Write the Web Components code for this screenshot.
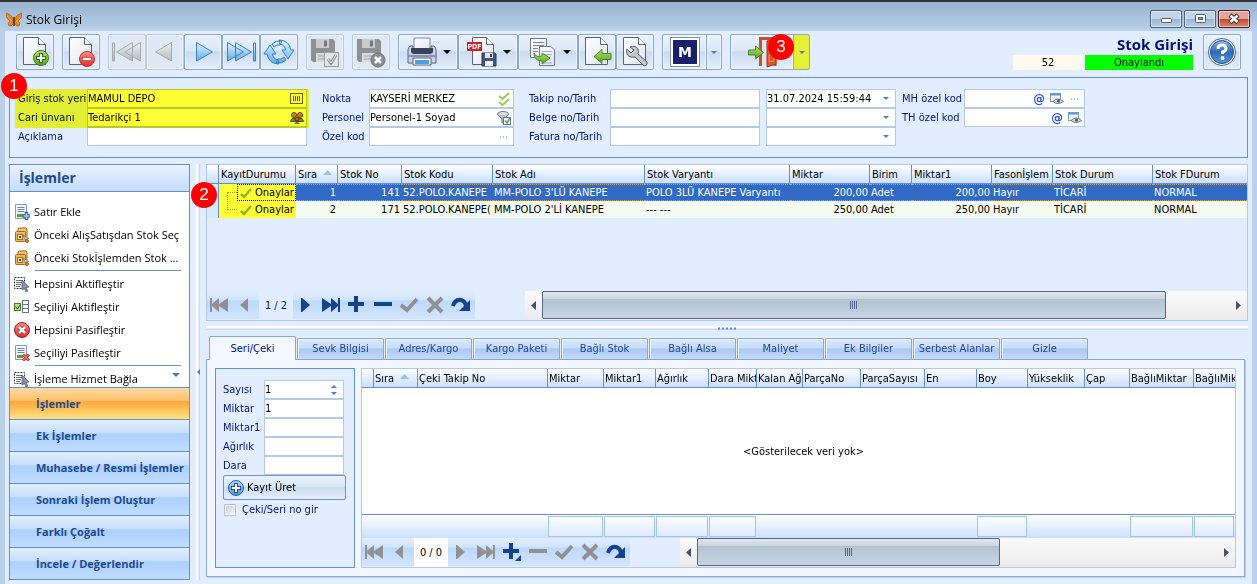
<!DOCTYPE html>
<html lang="tr">
<head>
<meta charset="utf-8">
<title>Stok Girişi</title>
<style>
    :root {
        --ui: "DejaVu Sans Condensed", "Noto Sans", sans-serif;
        --segoe: "Open Sans", "Noto Sans", sans-serif;
        --panel: #e2eeff;
        --line: #6590cf;
        --field-line: #b3c9e8;
        --label: #00157f;
        --mark: #ffff33;
    }
    html, body {
        margin: 0;
        height: 100%;
    }
    body {
        font: 11px/16px var(--ui);
        color: #000;
        background: #b9d1ea;
    }
</style>
</head>
<body>
<app-window title="Stok Girişi">
    <tool-bar></tool-bar>
    <header-form></header-form>
    <work-area>
        <side-panel slot="side"></side-panel>
        <grid-frame slot="top">
            <data-grid source="lines"></data-grid>
            <grid-navigator slot="nav" position="1 / 2" enabled="next last add remove redo"></grid-navigator>
            <scroll-bar slot="nav" thumb="624" rest="64"></scroll-bar>
        </grid-frame>
        <tab-panel slot="bottom">
            <record-form></record-form>
            <grid-frame fill>
                <data-grid source="serials"></data-grid>
                <grid-navigator slot="nav" position="0 / 0" enabled="addmenu redo" plain></grid-navigator>
                <scroll-bar slot="nav" thumb="303" rest="219"></scroll-bar>
            </grid-frame>
        </tab-panel>
    </work-area>
</app-window>

<script>
const GRADIENTS = `
    <defs>
        <linearGradient id="blue" x2="0" y2="1"><stop offset="0" stop-color="#e4f5ff"/><stop offset="1" stop-color="#5eaee8"/></linearGradient>
        <linearGradient id="gray" x2="0" y2="1"><stop offset="0" stop-color="#f2f2f2"/><stop offset="1" stop-color="#b4b8bd"/></linearGradient>
        <linearGradient id="green" x2="0" y2="1"><stop offset="0" stop-color="#b5e070"/><stop offset="1" stop-color="#55a020"/></linearGradient>
        <linearGradient id="red" x2="0" y2="1"><stop offset="0" stop-color="#ff8b84"/><stop offset="1" stop-color="#dc2f2a"/></linearGradient>
        <linearGradient id="paper" x2="1" y2="1"><stop offset="0" stop-color="#fff"/><stop offset="1" stop-color="#dfe4ee"/></linearGradient>
        <linearGradient id="orb" x2="0" y2="1"><stop offset="0" stop-color="#8fb8e6"/><stop offset=".5" stop-color="#2f68b4"/><stop offset="1" stop-color="#5b98dc"/></linearGradient>
        <linearGradient id="sky" x2="0" y2="1"><stop offset="0" stop-color="#b5d8f5"/><stop offset="1" stop-color="#4f96d4"/></linearGradient>
    </defs>`;

const PAGE = '<path d="M4.500 1.500H19.500L26.500 8.500V28.500H4.500Z" fill="url(#paper)" stroke="#5a6478"/><path d="M19.500 1.500V8.500H26.500" fill="#fff" stroke="#5a6478"/>';
const FLOPPY = '<path d="M2 3H24L26 5V26H4L2 24Z" fill="#8f9092"/><path d="M7 3H20V12H7Z" fill="#c9cbcd"/><path d="M15 4.500H18V10.500H15Z" fill="#77797b"/><path d="M7 17H21V26H7Z" fill="#d9dadb"/><path d="M9 20H19M9 23H19" stroke="#a0a2a4"/>';
const CURSOR_LIST = '<path d="M.5 1.500H10.500V12.500H.5Z" fill="#fff" stroke="#39415c" stroke-dasharray="2 1"/><path d="M2 4.500H9M2 6.500H9M2 8.500H7M2 10.500H6" stroke="#68718a"/><path d="M8 4L15 11L12 11.500L14 15L12 16L10.500 12.500L8 14Z" fill="#8a93a5" stroke="#4b5468" stroke-width=".7"/>';
const LIST_PAGE = '<path d="M1.500 .5H12.500V14.500H1.500Z" fill="#f4f8fd" stroke="#7f9cc4"/><path d="M3.500 3.500H10.500M3.500 5.500H10.500M3.500 7.500H10.500" stroke="#6d87ac"/><path d="M3 10H9V13H3Z" fill="#57a42c"/>';
const BOX = '<path d="M4 4V2Q5 .5 8 1Q12 0 13 2V10L11 12V5H3Z" fill="#f1c27b" stroke="#a86b1c"/><rect x="1.500" y="4.500" width="10" height="10" rx="1" fill="#f3b75c" stroke="#a86b1c"/><rect x="3.500" y="7.500" width="5" height="5" fill="#fff3dc" stroke="#a86b1c"/><path d="M6 9V11" stroke="#57400f" stroke-width="2"/><path d="M9 8L14.500 11.500L12 12V14Z" fill="#f6f6f6" stroke="#7a7a7a"/><circle cx="13" cy="14" r="1.500" fill="#e79a2a" stroke="#8c5a12"/>';

// name: [viewBox width, viewBox height, markup]
const ICONS = {
    butterfly: [16, 16, '<path d="M8 8Q5 2 0 1Q0 7 4 9Q1 11 3 14Q6 15 8 10Q10 15 13 14Q15 11 12 9Q16 7 16 1Q11 2 8 8Z" fill="#f29a2c" stroke="#a55a10" stroke-width=".8"/><path d="M2 3L7 9M14 3L9 9M4 13L7 9M12 13L9 9" stroke="#c56a10" stroke-width=".8"/><path d="M8 5V14" stroke="#4a2a10" stroke-width="1.500"/>'],
    "new": [32, 32, PAGE + '<circle cx="22" cy="22" r="7.500" fill="url(#green)" stroke="#3f7d1a"/><path d="M22 17V27M17 22H27" stroke="#37701a" stroke-width="4"/><path d="M22 18V26M18 22H26" stroke="#fff" stroke-width="2"/>'],
    "delete": [32, 32, PAGE + '<circle cx="22" cy="23" r="7.500" fill="url(#red)" stroke="#c5332e"/><rect x="17.500" y="21.500" width="9" height="3" fill="#fff" stroke="#b32925" stroke-width=".6"/>'],
    first: [32, 32, '<path d="M1.500 7V25H3.500V7Z M21.500 6.500V25L5.500 16Z M29.500 6.500V25L13.500 16Z" fill="url(#gray)" stroke="#a5a9af"/>'],
    prev: [32, 32, '<path d="M22.500 6.500V25L6.500 16Z" fill="url(#gray)" stroke="#a5a9af"/>'],
    next: [32, 32, '<path d="M9.500 6.500V25L25.500 16Z" fill="url(#blue)" stroke="#3f7fbd"/>'],
    last: [32, 32, '<path d="M2.500 6.500V25L18.500 16Z M10.500 6.500V25L26.500 16Z M28.500 7V25H30.500V7Z" fill="url(#blue)" stroke="#3f7fbd"/>'],
    refresh: [32, 32, '<path d="M4 18H1L7 9L13 18H9.500Q10 23 15 24L16 28Q6 28 4 18Z M28 14H31L25 23L19 14H22.500Q22 9 17 8L16 4Q26 4 28 14Z M9 8Q13 4 19 5L17 9Q14 8 11 11Z M23 24Q19 28 13 27L15 23Q18 24 21 21Z" fill="url(#blue)" stroke="#3580bd"/>'],
    savecheck: [32, 32, FLOPPY + '<rect x="15.500" y="16.500" width="14" height="14" fill="#e4e5e6" stroke="#9a9b9d"/><path d="M19 23L22 27L27 19" fill="none" stroke="#8a8b8d" stroke-width="3"/><path d="M19 23L22 27L27 19" fill="none" stroke="#fff"/>'],
    savex: [32, 32, FLOPPY + '<circle cx="23" cy="24" r="7" fill="#8a8c8e" stroke="#717375"/><path d="M20 21L26 27M26 21L20 27" stroke="#fff" stroke-width="2.500"/>'],
    printer: [32, 32, '<path d="M8 2H24V14H8Z" fill="url(#paper)" stroke="#8089a0"/><path d="M2 14Q2 12 4 10H7V15H25V10H28Q30 12 30 14V27H2Z" fill="#c9d2e4" stroke="#59637e"/><path d="M5 12H27V16Q26 18 24 18H8Q6 18 5 16Z" fill="#3b4257"/><path d="M2 19H30V21H2Z" fill="#8390b0"/><path d="M7 22H25V29H7Z" fill="#fff" stroke="#59637e"/><path d="M9 24H23V28H9Z" fill="#4b9fe0"/>'],
    pdf: [32, 32, '<path d="M6.500 1.500H20.500L27.500 8.500V28.500H6.500Z" fill="url(#paper)" stroke="#5a6478"/><path d="M20.500 1.500V8.500H27.500" fill="#fff" stroke="#5a6478"/><rect x="1" y="6" width="15" height="9" fill="#cf2022"/><text x="8.500" y="13" text-anchor="middle" font-family="DejaVu Sans Condensed" font-size="7" font-weight="700" fill="#fff">PDF</text><path d="M16 17H29L30 18V30H16Z" fill="#44557c" stroke="#303b5a"/><path d="M19 17H27V22H19Z" fill="#dfe4ee"/><path d="M25 18V21" stroke="#303b5a" stroke-width="2"/><path d="M19 25H27V30H19Z" fill="#eef1f6"/>'],
    transfer: [32, 32, '<path d="M4.500 2.500H20.500V21.500H4.500Z" fill="url(#paper)" stroke="#6b7896"/><path d="M7 6.500H18M7 9.500H18M7 12.500H12M7 15.500H12" stroke="#7987a5"/><path d="M13.500 10.500H25L28.500 14V29.500H13.500Z" fill="url(#paper)" stroke="#6b7896"/><path d="M16 15.500H26M16 18.500H26M16 27H26" stroke="#a5afc4"/><path d="M8 17Q10 22 16 20V17L24 22L16 28V25Q8 25 8 17Z" fill="url(#green)" stroke="#4c8822"/>'],
    "import": [32, 32, PAGE + '<path d="M13 20.500L21 13.500V17.500H30V23.500H21V27.500Z" fill="url(#green)" stroke="#4c8822"/>'],
    wrench: [32, 32, PAGE + '<path d="M8 13L12 17L15 14L11 11Q17 9 19 13Q20 16 19 18L28 26Q29 29 26 30L24 29L16 21Q10 22 8 18Q7 15 8 13Z" fill="#c3c8d0" stroke="#555d6b"/>'],
    m: [32, 32, '<rect x="1.500" y="1.500" width="29" height="29" fill="#fff" stroke="#8290b4"/><rect x="4" y="4" width="24" height="24" fill="#18206c"/><text x="16" y="21" text-anchor="middle" font-family="DejaVu Sans" font-size="14" font-weight="700" fill="#fff">M</text>'],
    door: [32, 32, '<path d="M14.500 30V2.500H29V30" fill="none" stroke="#c8512c" stroke-width="3"/><path d="M16 4H28V28H16Z" fill="#dce6f2"/><path d="M21 5L30 3V28L21 31Z" fill="#dd5527" stroke="#a83a15"/><path d="M23 8L28 7V15L23 16ZM23 19L28 18V25L23 26Z" fill="none" stroke="#f08a5e"/><path d="M2.500 14H9.500V10L17.500 16.500L9.500 23V19H2.500Z" fill="url(#green)" stroke="#4c8822"/>'],
    help: [32, 32, '<circle cx="16" cy="16" r="13.500" fill="#f4f8fd" stroke="#48618f"/><circle cx="16" cy="16" r="11.500" fill="url(#orb)" stroke="#274f8e"/><path d="M12 13Q12 9 16 9Q20 9 20 12.500Q20 15 16.500 16V18" fill="none" stroke="#fff" stroke-width="3"/><circle cx="16.500" cy="22" r="2" fill="#fff"/>'],
    down: [8, 4, '<path d="M0 0H8L4 4Z" fill="currentColor"/>'],
    up: [8, 4, '<path d="M0 4H8L4 0Z" fill="currentColor"/>'],
    minimize: [18, 12, '<rect x="4.500" y="5.500" width="10" height="4" rx="1" fill="#fff" stroke="#4d5a6c"/>'],
    maximize: [18, 12, '<rect x="4.500" y="1.500" width="10" height="8" rx="1" fill="#fff" stroke="#4d5a6c"/><rect x="7.500" y="4.500" width="4" height="2" fill="#8ea9c8" stroke="#4d5a6c"/>'],
    close: [18, 12, '<path d="M5 2L13 9.500M13 2L5 9.500" stroke="#4a2a2c" stroke-width="4.500"/><path d="M5.500 2.500L12.500 9M12.500 2.500L5.500 9" stroke="#fff" stroke-width="2.500"/>'],
    barcode: [14, 12, '<rect x=".5" y=".5" width="12" height="10" fill="none" stroke="#75600c"/><path d="M3.500 3V8M5.500 3V8M7.500 3V8M9.500 3V8" stroke="#5d4c08"/>'],
    people: [14, 14, '<circle cx="4" cy="4" r="2.500" fill="#c98a40" stroke="#6e3f14"/><circle cx="10" cy="4" r="2.500" fill="#c98a40" stroke="#6e3f14"/><path d="M.5 10.500Q1 7 4 7Q7 7 7 10Q7 7 10 7Q13 7 13.500 10.500Z" fill="#6f8f3a" stroke="#41551f"/><circle cx="7" cy="8" r="2" fill="#a5702d" stroke="#5e3510"/><path d="M4 13Q7 9 10 13Z" fill="#7a6a2a"/>'],
    checks: [12, 14, '<path d="M1 4L4.500 7L11 1M1 10L4.500 13L11 7" fill="none" stroke="#97cc4b" stroke-width="2"/>'],
    filter: [14, 14, '<ellipse cx="6" cy="3" rx="5.500" ry="2.500" fill="#dfe4ea" stroke="#6a7482"/><path d="M1 4L5 8V12L7 11V8L11 4" fill="#b9c1cc" stroke="#6a7482"/><rect x="6.500" y="6.500" width="7" height="7" fill="#fff" stroke="#6a7482"/><path d="M8 9.500L10 12L13 7" fill="none" stroke="#4fa53d" stroke-width="1.500"/>'],
    dots: [10, 4, '<path d="M1 2H2M4 2H5M7 2H8" stroke="#4f7fbf"/>'],
    eye: [14, 12, '<rect x=".5" y=".5" width="10" height="8" fill="#eef5fd" stroke="#7f9dc3"/><path d="M0 1.500H11" stroke="#6496cc" stroke-width="2"/><path d="M3 8.500Q8 3.500 13.500 8.500Q8 12.500 3 8.500Z" fill="#dce1e8" stroke="#66707f"/><circle cx="8.500" cy="8" r="1.600" fill="#4f5868"/>'],
    listadd: [16, 16, LIST_PAGE + '<path d="M12.500 8V16M8.500 12H16" stroke="#2b5c9e" stroke-width="3.500"/><path d="M12.500 9V15M9.500 12H15.500" stroke="#a9cdf5" stroke-width="1.500"/>'],
    listdel: [16, 16, LIST_PAGE + '<path d="M9 9.500L15 15.500M15 9.500L9 15.500" stroke="#c33434" stroke-width="3"/><path d="M9.500 10L14.500 15M14.500 10L9.500 15" stroke="#ff9a94"/>'],
    box: [16, 16, BOX],
    cursorlist: [16, 16, CURSOR_LIST],
    checkgrid: [16, 16, '<rect x="8.500" y="1.500" width="6" height="12" fill="#fff" stroke="#5a77a6"/><path d="M8 5.500H15M8 9.500H15" stroke="#5a77a6"/><rect x=".5" y="4.500" width="6" height="7" fill="#b9e07c" stroke="#4d7d1c"/><path d="M1.500 7.500L3.500 10L6 6" fill="none" stroke="#2d5a0a"/>'],
    redx: [16, 16, '<circle cx="8" cy="8" r="7.500" fill="url(#red)" stroke="#8e2020"/><path d="M5 5L11 11M11 5L5 11" stroke="#8c2a2a" stroke-width="4"/><path d="M5 5L11 11M11 5L5 11" stroke="#fff" stroke-width="2.500"/>'],
    pluscircle: [16, 16, '<circle cx="8" cy="8" r="7.500" fill="url(#sky)" stroke="#2c5c9c"/><path d="M8 3V13M3 8H13" stroke="#24508d" stroke-width="4"/><path d="M8 4V12M4 8H12" stroke="#fff" stroke-width="2"/>'],
    tick: [12, 12, '<path d="M1 7L4 10L11 2" fill="none" stroke="#93b32c" stroke-width="2.500"/>'],
    navfirst: [20, 18, '<path d="M1 2H3V8L10 2V8L19 2V16L10 10V16L3 10V16H1Z" fill="currentColor"/>'],
    navprev: [20, 18, '<path d="M13 2V16L5 9Z" fill="currentColor"/>'],
    navnext: [20, 18, '<path d="M6 2V16H7L15 9L7 2Z" fill="currentColor"/>'],
    navlast: [20, 18, '<path d="M19 2H17V8L10 2V8L1 2V16L10 10V16L17 10V16H19Z" fill="currentColor"/>'],
    navadd: [20, 18, '<path d="M9 0V16M1 8H17" stroke="currentColor" stroke-width="4"/>'],
    navaddmenu: [20, 18, '<path d="M9 0V16M1 8H17" stroke="currentColor" stroke-width="4"/><path d="M19 12V18H13Z" fill="currentColor"/>'],
    navremove: [20, 18, '<path d="M1 8H19" stroke="currentColor" stroke-width="4"/>'],
    navcheck: [20, 18, '<path d="M2 9L8 14L18 3" fill="none" stroke="currentColor" stroke-width="4"/>'],
    navcancel: [20, 18, '<path d="M3 2L17 16M17 2L3 16" fill="none" stroke="currentColor" stroke-width="4"/>'],
    navredo: [20, 18, '<path d="M2 10Q4 3 10 4Q14 5 15 10" fill="none" stroke="currentColor" stroke-width="4"/><path d="M19 4V15H8Z" fill="currentColor"/>']
};

function icon(name, width, height) {
    const [w, h, body] = ICONS[name];
    return `<svg width="${width || w}" height="${height || h}" viewBox="0 0 ${w} ${h}" aria-hidden="true">${body.includes("url(") ? GRADIENTS : ""}${body}</svg>`;
}

function render(element, html) {
    const template = document.createElement("template");
    template.innerHTML = html;
    element.attachShadow({ mode: "open" }).appendChild(template.content.cloneNode(true));
}

// Red numbered marker laid over the content
class StepMark extends HTMLElement {
    constructor() {
        super();
        render(this, `
            <style>
                :host {
                    position: absolute;
                    z-index: 5;
                    width: 26px;
                    height: 26px;
                    border-radius: 50%;
                    background: #f00;
                    color: #fff;
                    font: 17px/26px "Liberation Sans", sans-serif;
                    text-align: center;
                }
            </style>
            <slot></slot>
        `);
    }
}

class AppWindow extends HTMLElement {
    constructor() {
        super();
        render(this, `
            <style>
                :host {
                    display: flex;
                    flex-direction: column;
                    min-height: 100%;
                    box-sizing: border-box;
                    border-top: 2px solid #37343c;
                }
                header {
                    display: flex;
                    align-items: center;
                    gap: 4px;
                    height: 29px;
                    padding: 6px 7px 0 6px;
                    box-sizing: border-box;
                    background: linear-gradient(#98b2d0, #b9d1ea);
                    font: 12px/16px var(--segoe);
                }
                h1 {
                    flex: 1;
                    margin: 0;
                    font: inherit;
                }
                .controls {
                    display: flex;
                    gap: 2px;
                    align-self: flex-start;
                    margin-top: 2px;
                }
                .controls button {
                    display: grid;
                    place-items: center;
                    width: 32px;
                    height: 18px;
                    padding: 0;
                    border: 1px solid #52617a;
                    border-radius: 2px;
                    box-shadow: inset 0 0 0 1px #ffffff80;
                    background: linear-gradient(#c3d4e8 50%, #9bb4d0 50%, #b9d0e6);
                }
                .controls .close {
                    border-color: #4b1c1e;
                    background: linear-gradient(#e3a598 50%, #bd4a37 50%, #d48a70);
                }
                main {
                    flex: 1;
                    display: flex;
                    flex-direction: column;
                    margin: 0 5px;
                    padding: 0 4px 4px;
                    background: var(--panel);
                }
            </style>
            <header>
                ${icon("butterfly")}
                <h1>${this.getAttribute("title")}</h1>
                <div class="controls">
                    <button aria-label="Küçült">${icon("minimize")}</button>
                    <button aria-label="Büyüt">${icon("maximize")}</button>
                    <button class="close" aria-label="Kapat">${icon("close")}</button>
                </div>
            </header>
            <main><slot></slot></main>
        `);
    }
}

class ToolButton extends HTMLElement {
    constructor() {
        super();
        const menu = this.getAttribute("menu");
        render(this, `
            <style>
                :host {
                    display: flex;
                    position: relative;
                }
                button {
                    display: flex;
                    align-items: center;
                    justify-content: center;
                    gap: 4px;
                    min-width: 38px;
                    height: 36px;
                    padding: 0 2px;
                    box-sizing: border-box;
                    border: 1px solid #8aa8cf;
                    border-radius: 2px;
                    box-shadow: inset 0 0 0 1px #ffffff90;
                    background: linear-gradient(#e9f2fd, #dce8f7 45%, #cbdbee 50%, #e3eefb);
                }
                button:disabled {
                    border-color: #b9c9df;
                    background: #dfe9f6;
                }
                :host([menu="plain"]) button {
                    width: 60px;
                    gap: 5px;
                }
                :host([menu="split"]) .main {
                    width: 45px;
                    border-radius: 2px 0 0 2px;
                }
                :host([wide]) .main {
                    width: 64px;
                }
                .drop {
                    min-width: 16px;
                    margin-left: -1px;
                    color: #4f7fbf;
                    border-radius: 0 2px 2px 0;
                }
                :host([wide]) .drop {
                    min-width: 17px;
                    background: #e4f031;
                    box-shadow: none;
                }
                step-mark {
                    left: 38px;
                    top: 0;
                }
            </style>
            <button class="main" aria-label="${this.getAttribute("label")}" ${this.hasAttribute("off") ? "disabled" : ""}>
                ${icon(this.getAttribute("icon"))}${menu === "plain" ? icon("down") : ""}
            </button>
            ${menu === "split" ? `<button class="drop" aria-label="Seçenekler">${icon("down", 6, 3)}</button>` : ""}
            ${this.hasAttribute("wide") ? "<step-mark>3</step-mark>" : ""}
        `);
    }
}

class ToolBar extends HTMLElement {
    constructor() {
        super();
        render(this, `
            <style>
                :host {
                    display: flex;
                    align-items: flex-start;
                    gap: 8px;
                    height: 43px;
                    padding: 3px 7px 0;
                }
                .group {
                    display: flex;
                }
                .status {
                    display: grid;
                    grid-template-columns: 70px 108px;
                    gap: 0 2px;
                    margin-left: auto;
                    line-height: 15px;
                    text-align: center;
                }
                .status strong {
                    grid-column: 1 / 3;
                    text-align: right;
                    color: #00137a;
                    font: 700 15px/21px var(--segoe);
                }
                .count { background: #fff9ee; }
                .state { background: #0f0; }
                .status + tool-button { margin-left: 2px; }
            </style>
            <tool-button icon="new" label="Yeni"></tool-button>
            <tool-button icon="delete" label="Sil"></tool-button>
            <div class="group">
                <tool-button icon="first" label="İlk" off></tool-button>
                <tool-button icon="prev" label="Önceki" off></tool-button>
                <tool-button icon="next" label="Sonraki"></tool-button>
                <tool-button icon="last" label="Son"></tool-button>
                <tool-button icon="refresh" label="Yenile"></tool-button>
            </div>
            <tool-button icon="savecheck" label="Kaydet" off></tool-button>
            <tool-button icon="savex" label="Vazgeç" off></tool-button>
            <div class="group">
                <tool-button icon="printer" label="Yazdır" menu="plain"></tool-button>
                <tool-button icon="pdf" label="PDF kaydet" menu="plain"></tool-button>
                <tool-button icon="transfer" label="Aktar" menu="plain"></tool-button>
                <tool-button icon="import" label="İçeri al"></tool-button>
                <tool-button icon="wrench" label="Ayarlar"></tool-button>
            </div>
            <tool-button icon="m" label="M" menu="split"></tool-button>
            <tool-button icon="door" label="Çıkış" menu="split" wide></tool-button>
            <div class="status">
                <strong>Stok Girişi</strong>
                <span class="count">52</span>
                <span class="state">Onaylandı</span>
            </div>
            <tool-button icon="help" label="Yardım"></tool-button>
        `);
    }
}

// One label + box pair; the pair lands in the columns of the parent grid
class FormField extends HTMLElement {
    constructor() {
        super();
        const label = this.getAttribute("label") || "";
        const name = label || this.getAttribute("name");
        const value = this.getAttribute("value") || "";
        const kind = this.getAttribute("kind");
        const icons = (this.getAttribute("icons") || "").split(" ").filter(Boolean);
        const control = kind === "date"
            ? `<select id="control" aria-label="${name}"><option>${value}</option></select><span class="arrow">${icon("down", 6, 3)}</span>`
            : `<input id="control" value="${value}" aria-label="${name}">`;
        render(this, `
            <style>
                :host {
                    display: contents;
                }
                label {
                    color: var(--label);
                    line-height: 19px;
                    white-space: nowrap;
                }
                .box {
                    position: relative;
                    display: flex;
                    align-items: center;
                    height: 19px;
                    box-sizing: border-box;
                    border: 1px solid var(--field-line);
                    background: #fff;
                    color: #4f7fbf;
                }
                input, select {
                    appearance: none;
                    flex: 1;
                    min-width: 0;
                    height: 17px;
                    margin: 0;
                    padding: 0;
                    border: 0;
                    outline: 0;
                    background: none;
                    color: #000;
                    font: inherit;
                }
                .box button {
                    display: grid;
                    place-items: center;
                    min-width: 18px;
                    height: 17px;
                    padding: 0;
                    border: 0;
                    background: none;
                    color: #2a4fe0;
                    font: 700 13px/16px var(--ui);
                }
                .arrow {
                    display: flex;
                    padding: 0 6px;
                    pointer-events: none;
                }
                .spin {
                    display: flex;
                    flex-direction: column;
                    gap: 4px;
                    padding: 0 6px;
                }
            </style>
            ${this.hasAttribute("label") ? `<label for="control">${label}</label>` : ""}
            <div class="box">
                ${control}
                ${kind === "spin" ? `<span class="spin">${icon("up", 6, 3)}${icon("down", 6, 3)}</span>` : ""}
                ${icons.map(item => `<button aria-label="${name} seç">${item === "at" ? "@" : icon(item)}</button>`).join("")}
            </div>
        `);
    }
}

class HeaderForm extends HTMLElement {
    constructor() {
        super();
        render(this, `
            <style>
                :host {
                    position: relative;
                    display: flex;
                    align-items: flex-start;
                    padding: 11px 8px;
                    border: 1px solid var(--line);
                }
                .group {
                    display: grid;
                    margin-right: 15px;
                }
                .stock { grid-template-columns: 69px 220px; }
                .point { grid-template-columns: 47px 145px; }
                .paper { grid-template-columns: 81px 150px; }
                .dates { grid-template-columns: 130px; }
                .codes { grid-template-columns: 62px 121px; }
                .paper, .dates { margin-right: 6px; }
                .highlight {
                    position: absolute;
                    left: 5px;
                    top: 11px;
                    width: 294px;
                    height: 39px;
                    background: var(--mark);
                    mix-blend-mode: multiply;
                    pointer-events: none;
                }
                step-mark {
                    left: -9px;
                    top: -5px;
                }
            </style>
            <div class="group stock">
                <form-field label="Giriş stok yeri" value="MAMUL DEPO" icons="barcode"></form-field>
                <form-field label="Cari ünvanı" value="Tedarikçi 1" icons="people"></form-field>
                <form-field label="Açıklama"></form-field>
            </div>
            <div class="group point">
                <form-field label="Nokta" value="KAYSERİ MERKEZ" icons="checks"></form-field>
                <form-field label="Personel" value="Personel-1 Soyad" icons="filter"></form-field>
                <form-field label="Özel kod" icons="dots"></form-field>
            </div>
            <div class="group paper">
                <form-field label="Takip no/Tarih"></form-field>
                <form-field label="Belge no/Tarih"></form-field>
                <form-field label="Fatura no/Tarih"></form-field>
            </div>
            <div class="group dates">
                <form-field name="Takip tarihi" kind="date" value="31.07.2024 15:59:44"></form-field>
                <form-field name="Belge tarihi" kind="date"></form-field>
                <form-field name="Fatura tarihi" kind="date"></form-field>
            </div>
            <div class="group codes">
                <form-field label="MH özel kod" icons="at eye dots"></form-field>
                <form-field label="TH özel kod" icons="at eye"></form-field>
            </div>
            <div class="highlight"></div>
            <step-mark>1</step-mark>
        `);
    }
}

class WorkArea extends HTMLElement {
    constructor() {
        super();
        render(this, `
            <style>
                :host {
                    flex: 1;
                    display: grid;
                    grid-template-columns: 181px 16px minmax(0, 1fr);
                    margin-top: 6px;
                    position: relative;
                }
                .vsplit, .hsplit {
                    display: grid;
                    place-items: center;
                    background: linear-gradient(90deg, transparent 6px, #fff 6px, #fff 8px, transparent 8px, transparent 9px, #c3dcff 9px, #c3dcff 10px, transparent 10px);
                    color: #4f7fbf;
                }
                .hsplit {
                    flex: none;
                    height: 15px;
                    background: linear-gradient(transparent 5px, #fff 5px, #fff 7px, transparent 7px, transparent 8px, #c3dcff 8px, #c3dcff 9px, transparent 9px);
                }
                .right {
                    display: flex;
                    flex-direction: column;
                    min-width: 0;
                }
                step-mark {
                    left: 182px;
                    top: 18px;
                }
            </style>
            <slot name="side"></slot>
            <div class="vsplit"><svg width="3" height="6"><path d="M3 0V6L0 3Z" fill="#4f7fbf"/></svg></div>
            <div class="right">
                <slot name="top"></slot>
                <div class="hsplit"><svg width="20" height="3"><path d="M1 1.500H20" stroke="#5f84b8" stroke-width="2" stroke-dasharray="2 2"/></svg></div>
                <slot name="bottom"></slot>
            </div>
            <step-mark>2</step-mark>
        `);
    }
}

const sideItems = [
    { icon: "listadd", text: "Satır Ekle" },
    { icon: "box", text: "Önceki AlışSatışdan Stok Seç" },
    { icon: "box", text: "Önceki Stokİşlemden Stok ...", line: true },
    { icon: "cursorlist", text: "Hepsini Aktifleştir" },
    { icon: "checkgrid", text: "Seçiliyi Aktifleştir" },
    { icon: "redx", text: "Hepsini Pasifleştir" },
    { icon: "listdel", text: "Seçiliyi Pasifleştir", line: true },
    { icon: "cursorlist", text: "İşleme Hizmet Bağla" }
];

const sideGroups = ["İşlemler", "Ek İşlemler", "Muhasebe / Resmi İşlemler", "Sonraki İşlem Oluştur", "Farklı Çoğalt", "İncele / Değerlendir"];

class SidePanel extends HTMLElement {
    constructor() {
        super();
        render(this, `
            <style>
                :host {
                    display: flex;
                    flex-direction: column;
                    border: 1px solid var(--line);
                    background: #fff;
                    font: 11px/16px var(--segoe);
                    min-width: 0;
                }
                h2 {
                    margin: 0;
                    padding-left: 9px;
                    border-bottom: 1px solid var(--line);
                    background: linear-gradient(#eaf3ff, #c3dcff);
                    color: #1e4a8c;
                    font: 700 14px/26px var(--segoe);
                }
                .list {
                    position: relative;
                    flex: 1 1 195px;
                    height: 195px;
                    padding-top: 8px;
                    box-sizing: border-box;
                    overflow: hidden;
                }
                .list button {
                    display: flex;
                    align-items: center;
                    gap: 4px;
                    width: 100%;
                    height: 23px;
                    padding: 0 0 0 4px;
                    border: 0;
                    background: none;
                    font: inherit;
                    white-space: nowrap;
                }
                .list svg {
                    flex: none;
                }
                hr {
                    height: 1px;
                    margin: 1px 8px 1px 25px;
                    border: 0;
                    background: var(--line);
                }
                .more {
                    position: absolute;
                    right: 9px;
                    bottom: 10px;
                    display: flex;
                    color: #4178c0;
                }
                nav button {
                    display: block;
                    width: 100%;
                    height: 32px;
                    padding: 0 0 0 26px;
                    border: 0;
                    border-top: 1px solid var(--line);
                    background: linear-gradient(#e3efff, #c6dfff 42%, #abd0ff 44%, #c1dcff);
                    color: #1e4a8c;
                    font: 700 11px/16px var(--segoe);
                    text-align: left;
                    white-space: nowrap;
                }
                nav button:first-child {
                    background: linear-gradient(#ffdaa8, #ffc169 40%, #ffa63c 44%, #ffe481);
                }
            </style>
            <h2>İşlemler</h2>
            <div class="list">
                ${sideItems.map(item => `<button>${icon(item.icon)}${item.text}</button>${item.line ? "<hr>" : ""}`).join("")}
                <span class="more">${icon("down")}</span>
            </div>
            <nav>${sideGroups.map(group => `<button>${group}</button>`).join("")}</nav>
        `);
    }
}

const grids = {
    lines: {
        columns: [["", 12], ["KayıtDurumu", 77], ["Sıra", 42], ["Stok No", 64], ["Stok Kodu", 91], ["Stok Adı", 152], ["Stok Varyantı", 145], ["Miktar", 80], ["Birim", 42], ["Miktar1", 80], ["Fasonİşlem", 61], ["Stok Durum", 100], ["Stok FDurum", 0]],
        right: [2, 3, 7, 9],
        rows: [
            ["", "Onaylar", "1", "141", "52.POLO.KANEPE", "MM-POLO 3'LÜ KANEPE", "POLO 3LÜ KANEPE Varyantı", "200,00", "Adet", "200,00", "Hayır", "TİCARİ", "NORMAL"],
            ["", "Onaylar", "2", "171", "52.POLO.KANEPE(", "MM-POLO 2'Lİ KANEPE", "--- ---", "250,00", "Adet", "250,00", "Hayır", "TİCARİ", "NORMAL"]
        ]
    },
    serials: {
        columns: [["", 12], ["Sıra", 44], ["Çeki Takip No", 130], ["Miktar", 56], ["Miktar1", 52], ["Ağırlık", 53], ["Dara Mikt", 48], ["Kalan Ağ", 46], ["ParçaNo", 58], ["ParçaSayısı", 64], ["En", 52], ["Boy", 51], ["Yükseklik", 57], ["Çap", 45], ["BağlıMiktar", 64], ["BağlıMikt", 0]],
        totals: [3, 4, 5, 6, 11, 14, 15],
        empty: "&lt;Gösterilecek veri yok&gt;"
    }
};

class DataGrid extends HTMLElement {
    constructor() {
        super();
        const grid = grids[this.getAttribute("source")];
        const sort = '<svg class="sort" width="9" height="5"><path d="M0 5H9L4.500 0Z" fill="#93c0f5"/></svg>';
        const cell = (text, index) => {
            if (index === 1) {
                return `<td class="state"><div><span class="branch"></span><span class="focus">${icon("tick")}${text}</span></div></td>`;
            }
            return `<td class="${index === 0 ? "mark" : grid.right.includes(index) ? "num" : ""}">${text}</td>`;
        };
        const body = grid.rows
            ? grid.rows.map(row => `<tr>${row.map(cell).join("")}</tr>`).join("")
            : `<tr><td class="empty" colspan="${grid.columns.length}">${grid.empty}</td></tr>`;
        const foot = grid.totals
            ? `<tfoot><tr>${grid.columns.map((column, index) => `<td>${grid.totals.includes(index) ? "<div></div>" : ""}</td>`).join("")}</tr></tfoot>`
            : "";
        render(this, `
            <style>
                :host {
                    display: block;
                    flex: 1;
                }
                table {
                    width: 100%;
                    table-layout: fixed;
                    border-spacing: 0;
                }
                :host([source="serials"]) table {
                    height: 100%;
                }
                th, td {
                    box-sizing: border-box;
                    overflow: hidden;
                    white-space: nowrap;
                }
                th {
                    height: 19px;
                    padding: 2px 0 0 2px;
                    border-right: 1px solid var(--line);
                    border-bottom: 1px solid var(--line);
                    background: linear-gradient(#fff, #c9dfff);
                    font-weight: 400;
                    text-align: left;
                }
                :host([source="serials"]) th {
                    padding: 1px 0 0 1px;
                }
                th:last-child {
                    border-right: 0;
                }
                .sort {
                    margin-left: 6px;
                    vertical-align: 3px;
                }
                tbody td {
                    height: 17px;
                    padding: 1px 2px 0 1px;
                    background: #f4fcf2;
                    line-height: 14px;
                }
                tbody tr:first-child td {
                    background: #316ac5;
                    color: #fff;
                    border-top: 1px dotted #e0a040;
                    border-bottom: 1px dotted #e0a040;
                }
                .num { text-align: right; }
                tbody tr td.mark {
                    border: 0;
                    border-right: 1px solid var(--line);
                    background: #dbe9ff;
                }
                tbody tr td.state {
                    padding: 0 0 0 8px;
                    border: 0;
                    background: var(--mark);
                    color: #000;
                }
                .state div {
                    display: flex;
                    height: 17px;
                }
                .branch {
                    flex: none;
                    width: 9px;
                    height: 8px;
                    border-left: 1px dotted #9a9a20;
                    border-bottom: 1px dotted #9a9a20;
                }
                tr:first-child .branch {
                    height: 9px;
                    margin-top: 8px;
                    border-bottom: 0;
                    border-top: 1px dotted #9a9a20;
                }
                .focus {
                    flex: 1;
                    min-width: 0;
                    display: flex;
                    align-items: center;
                    gap: 3px;
                    box-sizing: border-box;
                    padding-left: 2px;
                    border: 1px solid transparent;
                }
                .focus svg { flex: none; }
                tr:first-child .focus {
                    border: 1px dotted #000;
                }
                tbody tr td.empty {
                    height: 100%;
                    padding-left: 12px;
                    border: 0;
                    background: #fff;
                    color: #000;
                    text-align: center;
                }
                tfoot td {
                    height: 24px;
                    padding: 0;
                    border-top: 1px solid var(--line);
                    background: linear-gradient(#fff, #cbe0ff);
                }
                tfoot div {
                    height: 19px;
                    margin-right: 1px;
                    border: 1px solid #a5c2ea;
                    background: #ffffff50;
                }
            </style>
            <table>
                <colgroup>${grid.columns.map(([, width]) => `<col${width ? ` style="width: ${width}px"` : ""}>`).join("")}</colgroup>
                <thead><tr>${grid.columns.map(([name]) => `<th>${name}${name === "Sıra" ? sort : ""}</th>`).join("")}</tr></thead>
                <tbody>${body}</tbody>
                ${foot}
            </table>
        `);
    }
}

class GridFrame extends HTMLElement {
    constructor() {
        super();
        render(this, `
            <style>
                :host {
                    display: flex;
                    flex-direction: column;
                    flex: none;
                    min-width: 0;
                    min-height: 155px;
                    border: 1px solid var(--field-line);
                    background: var(--panel);
                }
                :host([fill]) {
                    flex: 1;
                    min-height: 0;
                }
                .bar {
                    display: flex;
                    flex: none;
                    height: 29px;
                }
            </style>
            <slot></slot>
            <div class="bar"><slot name="nav"></slot></div>
        `);
    }
}

class GridNavigator extends HTMLElement {
    constructor() {
        super();
        const enabled = this.getAttribute("enabled").split(" ");
        const add = enabled.includes("addmenu") ? "addmenu" : "add";
        const button = name => `<button aria-label="${name}" ${enabled.includes(name) ? "" : "disabled"}>${icon("nav" + name)}</button>`;
        render(this, `
            <style>
                :host {
                    display: flex;
                    flex: none;
                    margin-right: 50px;
                }
                button {
                    display: grid;
                    place-items: center;
                    width: 26px;
                    height: 28px;
                    padding: 0 2px 0 0;
                    border: 0;
                    background: linear-gradient(#e2eeff, #d0e3ff 33%, #bcd8ff 35%, #d3e5ff);
                    color: #15428b;
                }
                button:disabled { color: #919191; }
                span {
                    width: 34px;
                    line-height: 30px;
                    text-align: center;
                    color: var(--label);
                }
                :host([plain]) span {
                    background: #fff;
                    color: #000;
                }
            </style>
            ${["first", "prev"].map(button).join("")}
            <span>${this.getAttribute("position")}</span>
            ${["next", "last", add, "remove", "check", "cancel", "redo"].map(button).join("")}
        `);
    }
}

class ScrollBar extends HTMLElement {
    constructor() {
        super();
        render(this, `
            <style>
                :host {
                    display: flex;
                    flex: 1;
                    background: linear-gradient(#fafafa, #ebebeb);
                }
                button {
                    width: 17px;
                    padding: 0;
                    border: 0;
                    background: none;
                }
                .thumb {
                    display: grid;
                    place-items: center;
                    flex: ${this.getAttribute("thumb")} 1 0;
                    box-sizing: border-box;
                    margin-bottom: 1px;
                    border: 1px solid #54658f;
                    border-radius: 2px;
                    background: linear-gradient(#e3e7ec, #ccd5de 25%, #b3c1d2 27%, #bccada 60%, #c9d3df);
                }
                .rest { flex: ${this.getAttribute("rest")} 1 0; }
            </style>
            <button aria-label="Sola"><svg width="5" height="9"><path d="M5 0V9L0 4.500Z" fill="#43536f"/></svg></button>
            <div class="thumb"><svg width="8" height="8"><path d="M.5 0V8M2.500 0V8M4.500 0V8M6.500 0V8" stroke="#54658f"/></svg></div>
            <div class="rest"></div>
            <button aria-label="Sağa"><svg width="5" height="9"><path d="M0 0V9L5 4.500Z" fill="#43536f"/></svg></button>
        `);
    }
}

const tabs = ["Seri/Çeki", "Sevk Bilgisi", "Adres/Kargo", "Kargo Paketi", "Bağlı Stok", "Bağlı Alsa", "Maliyet", "Ek Bilgiler", "Serbest Alanlar", "Gizle"];

class TabPanel extends HTMLElement {
    constructor() {
        super();
        render(this, `
            <style>
                :host {
                    flex: 1;
                    display: flex;
                    flex-direction: column;
                    margin: 0 3px 3px 0;
                }
                .tabs {
                    display: flex;
                    align-items: flex-end;
                    gap: 1px;
                    height: 23px;
                    padding-left: 3px;
                }
                button {
                    width: 87px;
                    height: 21px;
                    padding: 0;
                    border: 1px solid #8fa6cd;
                    border-bottom: 0;
                    border-radius: 2px 2px 0 0;
                    box-shadow: inset 1px 1px #eef5ff;
                    background: linear-gradient(#dbe9fc, #c7dcf8 45%, #aac9f2 50%, #c3dafa);
                    color: #1e4494;
                    font: inherit;
                }
                button.active {
                    position: relative;
                    height: 24px;
                    margin-bottom: -1px;
                    background: #f4f8ff;
                    color: #00157f;
                }
                .page {
                    flex: 1;
                    display: flex;
                    gap: 6px;
                    padding: 8px;
                    border: 1px solid #8fa6cd;
                    box-shadow: 1px 1px #b9cfee;
                    background: #f2f7ff;
                }
            </style>
            <div class="tabs">${tabs.map((tab, index) => `<button class="${index ? "" : "active"}">${tab}</button>`).join("")}</div>
            <div class="page"><slot></slot></div>
        `);
    }
}

class RecordForm extends HTMLElement {
    constructor() {
        super();
        render(this, `
            <style>
                :host {
                    flex: none;
                    width: 123px;
                    padding: 11px 8px 0 7px;
                    border: 1px solid var(--line);
                    background: var(--panel);
                }
                .fields {
                    display: grid;
                    grid-template-columns: 41px 80px;
                }
                .create {
                    display: flex;
                    align-items: center;
                    gap: 3px;
                    width: 100%;
                    height: 25px;
                    padding: 0 4px;
                    border: 1px solid #7592bc;
                    border-radius: 2px;
                    background: linear-gradient(#e9f2fd, #dce8f7 45%, #cbdbee 50%, #e3eefb);
                    font: inherit;
                }
                .check {
                    display: flex;
                    align-items: center;
                    gap: 5px;
                    height: 20px;
                    color: var(--label);
                }
                input {
                    appearance: none;
                    width: 12px;
                    height: 12px;
                    margin: 1px;
                    box-sizing: border-box;
                    border: 1px solid #b0c3de;
                    box-shadow: inset 0 0 0 1px #fff;
                    background: linear-gradient(135deg, #c4c8ce, #f8f8f8);
                }
            </style>
            <div class="fields">
                <form-field label="Sayısı" value="1" kind="spin"></form-field>
                <form-field label="Miktar" value="1"></form-field>
                <form-field label="Miktar1"></form-field>
                <form-field label="Ağırlık"></form-field>
                <form-field label="Dara"></form-field>
            </div>
            <button class="create">${icon("pluscircle")}Kayıt Üret</button>
            <label class="check"><input type="checkbox">Çeki/Seri no gir</label>
        `);
    }
}

customElements.define("step-mark", StepMark);
customElements.define("app-window", AppWindow);
customElements.define("tool-button", ToolButton);
customElements.define("tool-bar", ToolBar);
customElements.define("form-field", FormField);
customElements.define("header-form", HeaderForm);
customElements.define("work-area", WorkArea);
customElements.define("side-panel", SidePanel);
customElements.define("data-grid", DataGrid);
customElements.define("grid-frame", GridFrame);
customElements.define("grid-navigator", GridNavigator);
customElements.define("scroll-bar", ScrollBar);
customElements.define("tab-panel", TabPanel);
customElements.define("record-form", RecordForm);
</script>
</body>
</html>
